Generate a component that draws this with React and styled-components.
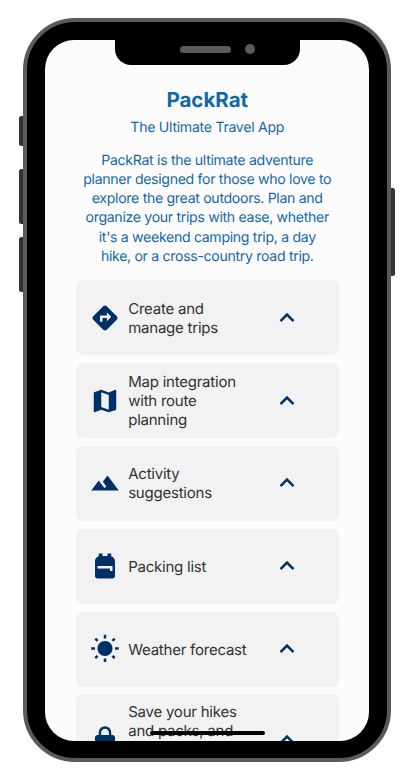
import React from "react";
import styled, { createGlobalStyle, css } from "styled-components";
import {
  MdDirections,
  MdMap,
  MdLandscape,
  MdBackpack,
  MdWbSunny,
  MdLock,
} from "react-icons/md";

const GlobalStyle = createGlobalStyle`
  * { box-sizing: border-box; }
  html, body { margin: 0; background: #ffffff; overflow: hidden; }
  body {
    font-family: Inter, "Liberation Sans", sans-serif;
    text-rendering: geometricPrecision;
  }
`;

const Stage = styled.main`
  display: flex;
  justify-content: center;
  height: 778px;
  width: 411px;
  padding: 17.5px 16px 0 19px;
  overflow: hidden;
`;

const ButtonRail = styled.div`
  display: flex;
  flex-direction: column;
  flex: none;
  width: 4px;
  padding-top: ${(p) => p.$start}px;
`;

const SideButton = styled.span`
  flex: none;
  height: ${(p) => p.$length}px;
  margin-bottom: ${(p) => p.$after || 0}px;
  background: #333;
  border-radius: ${(p) => (p.$right ? "0 2.5px 2.5px 0" : "2.5px 0 0 2.5px")};
`;

const Phone = styled.div`
  position: relative;
  flex: none;
  width: 368px;
  height: 744.5px;
  padding: 18.5px 18px 17px;
  border: 4px solid #5a5a5a;
  border-radius: 52px;
  background: #000;
`;

const Notch = styled.div`
  position: absolute;
  top: 17px;
  left: 88px;
  display: flex;
  align-items: center;
  gap: 14.4px;
  width: 184.5px;
  height: 26.5px;
  padding: 0 0 5px 64.5px;
  background: #000;
  border-radius: 0 0 16px 16px;
`;

const Speaker = styled.span`
  width: 51px;
  height: 7px;
  border-radius: 4px;
  background: #5a5a5a;
`;

const Camera = styled.span`
  width: 10px;
  height: 10px;
  border-radius: 50%;
  background: #5a5a5a;
`;

const Screen = styled.section`
  height: 701px;
  border-radius: 29px;
  background: #fcfcfc;
  overflow: hidden;
  padding: 47px 30px 0 30.5px;
`;

const Intro = styled.header`
  height: 193.2px;
  color: #1068a8;
  text-align: center;
  white-space: nowrap;
`;

const Title = styled.h1`
  margin: 0;
  font-size: 20.5px;
  line-height: 26px;
  font-weight: 700;
`;

const Tagline = styled.p`
  margin: 5px 0 0;
  font-size: 14.1px;
  letter-spacing: -0.28px;
  line-height: 19px;
`;

const Description = styled.p`
  margin: 13.9px 0 0;
  font-size: 14.1px;
  letter-spacing: -0.31px;
  line-height: 19.15px;
`;

const FeatureList = styled.ul`
  display: flex;
  flex-direction: column;
  gap: 7.75px;
  margin: 0;
  padding: 0;
  list-style: none;
`;

const Feature = styled.li`
  display: flex;
  align-items: center;
  flex: none;
  height: ${(p) => (p.$tall ? 92 : 75.1)}px;
  padding: 0 37.5px 0 14.9px;
  border-radius: 7px;
  background: #f2f2f2;
  color: #003068;

  svg { flex: none; }
`;

const FeatureLabel = styled.span`
  flex: 1;
  margin-left: 7.8px;
  color: #333;
  font-size: 15px;
  letter-spacing: -0.23px;
  line-height: 19px;
  white-space: pre;
  ${(p) =>
    p.$tall &&
    css`
      align-self: flex-start;
      padding-top: 8px;
    `}
`;

const ChevronIcon = styled.svg`
  width: 30px;
  height: 30px;
  fill: none;
  stroke: currentColor;
  stroke-width: 2;
`;

const HomeIndicator = styled.span`
  position: absolute;
  left: 122.5px;
  bottom: 23px;
  width: 115.5px;
  height: 4px;
  border-radius: 2px;
  background: #000;
`;

const features = [
  { icon: MdDirections, label: "Create and\nmanage trips" },
  { icon: MdMap, label: "Map integration\nwith route\nplanning" },
  { icon: MdLandscape, label: "Activity\nsuggestions" },
  { icon: MdBackpack, label: "Packing list" },
  { icon: MdWbSunny, label: "Weather forecast" },
  { icon: MdLock, label: "Save your hikes\nand packs, and", tall: true },
];

function Chevron() {
  return (
    <ChevronIcon viewBox="0 0 24 24">
      <path d="M6.8 14.5 12 9.3l5.2 5.2" />
    </ChevronIcon>
  );
}

export default function App() {
  return (
    <Stage>
      <GlobalStyle />
      <ButtonRail $start={98.5}>
        <SideButton $length={30} $after={23} />
        <SideButton $length={55} $after={13} />
        <SideButton $length={55} />
      </ButtonRail>
      <Phone>
        <Screen>
          <Intro>
            <Title>PackRat</Title>
            <Tagline>The Ultimate Travel App</Tagline>
            <Description>
              PackRat is the ultimate adventure<br />
              planner designed for those who love to<br />
              explore the great outdoors. Plan and<br />
              organize your trips with ease, whether<br />
              it's a weekend camping trip, a day<br />
              hike, or a cross-country road trip.
            </Description>
          </Intro>
          <FeatureList>
            {features.map(({ icon: Icon, label, tall }) => (
              <Feature key={label} $tall={tall}>
                <Icon size={30} />
                <FeatureLabel $tall={tall}>{label}</FeatureLabel>
                <Chevron />
              </Feature>
            ))}
          </FeatureList>
        </Screen>
        <Notch>
          <Speaker />
          <Camera />
        </Notch>
        <HomeIndicator />
      </Phone>
      <ButtonRail $start={170.5}>
        <SideButton $right $length={88} />
      </ButtonRail>
    </Stage>
  );
}
